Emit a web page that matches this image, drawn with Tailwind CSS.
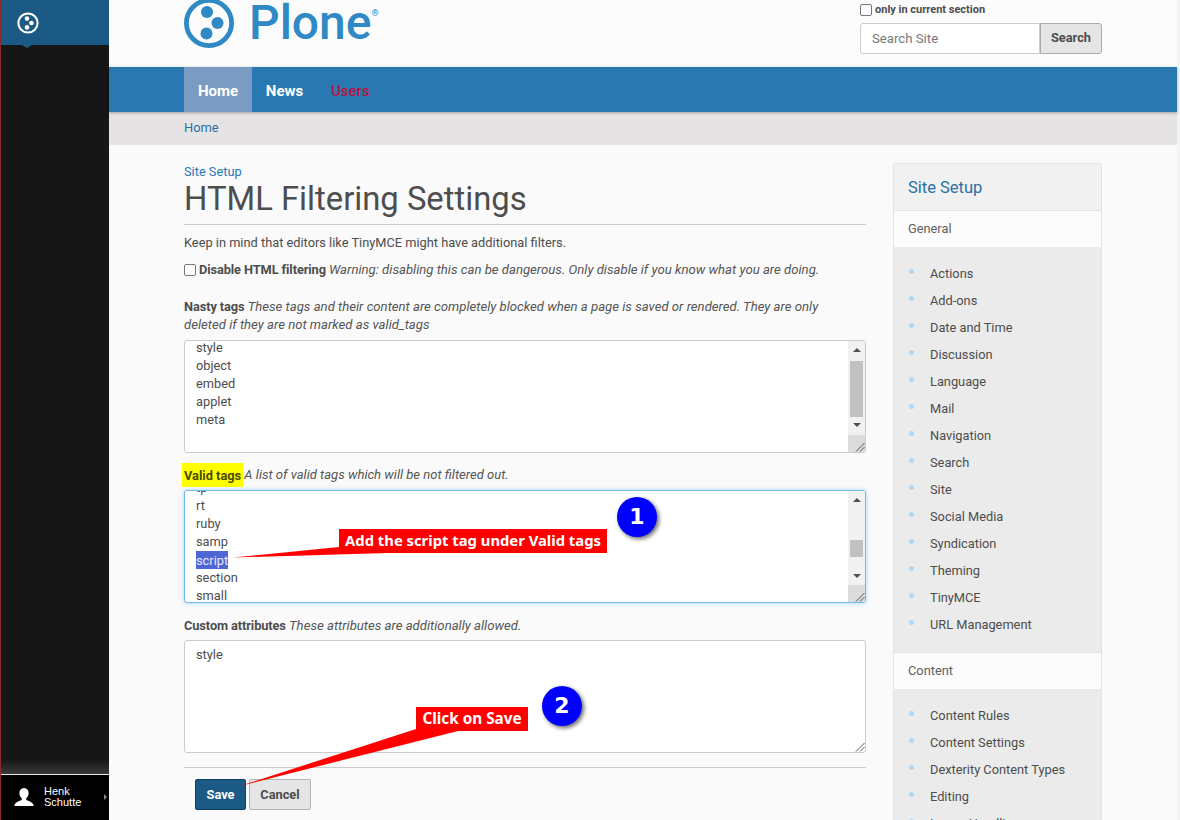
<!DOCTYPE html>
<html lang="en">
<head>
<meta charset="utf-8">
<title>HTML Filtering Settings</title>
<script src="https://cdn.jsdelivr.net/npm/@tailwindcss/browser@4"></script>
</head>
<body class="relative flex h-[820px] w-[1180px] overflow-hidden bg-[#fafafa] font-['Roboto',sans-serif] text-[12.8px] leading-[18px] text-[#4d4d4d]">

<aside class="relative flex w-[109px] shrink-0 flex-col border-l border-l-[#8c2a2a] bg-[#161616]">
  <div class="relative flex h-[45px] shrink-0 items-center bg-[#1a5a85] pl-[16px]">
    <svg width="22" height="22" viewBox="0 0 22 22" fill="none"><circle cx="11" cy="11" r="9.6" stroke="#fff" stroke-width="2"/><circle cx="10" cy="6.6" r="2.3" fill="#fff"/><circle cx="14.5" cy="11" r="2.3" fill="#fff"/><circle cx="10" cy="15.4" r="2.3" fill="#fff"/></svg>
    <div class="absolute left-[21px] top-[45px] h-0 w-0 border-x-[5px] border-t-[3px] border-x-transparent border-t-[#1a5a85]"></div>
  </div>
  <div class="flex-1 bg-gradient-to-b from-[#161616] from-[98%] to-[#3a3a3a]"></div>
  <div class="relative flex h-[46px] shrink-0 items-center border-t border-t-[#e8e8e8] bg-black pl-[13px] text-white">
    <svg width="20" height="19" viewBox="0 0 20 19" fill="#fff"><path d="M10 0c3 0 4.6 2.2 4.6 5 0 2.300-1 4.300-2.300 5.300v1.700c2.500 1 6 2.300 7.200 4.500v1.500H.5v-1.500c1.200-2.200 4.700-3.500 7.200-4.500v-1.700C6.400 9.300 5.400 7.300 5.400 5 5.400 2.200 7 0 10 0z"/></svg>
    <div class="ml-[10px] pb-[2px] font-['Liberation_Sans',sans-serif] text-[11px] font-medium leading-[11px]">Henk<br>Schutte</div>
    <div class="absolute left-[103px] top-[19px] h-0 w-0 border-y-[3px] border-l-[3px] border-y-transparent border-l-[#888]"></div>
  </div>
</aside>

<main class="flex w-[1068px] shrink-0 flex-col">
  <header class="flex h-[67px] shrink-0 items-start justify-between bg-[#fcfcfc] pl-[75px] pr-[75px]">
    <div class="flex items-start text-[#2f89c5]">
      <svg class="-mt-[2px]" width="50" height="50" viewBox="0 0 50 50" fill="none"><circle cx="25" cy="25" r="22.6" stroke="#2f89c5" stroke-width="4.800"/><circle cx="23" cy="14" r="6" fill="#2f89c5"/><circle cx="33.500" cy="25" r="6" fill="#2f89c5"/><circle cx="22.500" cy="35.500" r="6" fill="#2f89c5"/></svg>
      <span class="ml-[15px] -mt-[6px] text-[48px] font-medium leading-[58px]">Plone</span>
      <span class="mt-[9px] text-[9px] leading-[8px]">®</span>
    </div>
    <div class="w-[242px] pt-[2px]">
      <label class="flex h-[16px] items-center gap-[3px] text-[11px] font-bold leading-[16px]">
        <span class="h-[12px] w-[12px] rounded-[2px] border border-[#767676] bg-white"></span>only in current section
      </label>
      <div class="mt-[5px] flex h-[31px]">
        <div class="flex w-[180px] items-center rounded-l-[3px] border border-[#ccc] bg-white pl-[11px] text-[13.2px] text-[#777]">Search Site</div>
        <div class="flex w-[62px] items-center justify-center rounded-r-[3px] border border-[#aaa] bg-[#e5e5e5] pb-[2px] font-bold text-[#4d4d4d]">Search</div>
      </div>
    </div>
  </header>

  <nav class="relative z-10 flex h-[45px] shrink-0 bg-[#2a78b2] pl-[75px] text-[15px] font-bold shadow-[0_1px_3px_rgba(0,0,0,0.3)]">
    <a class="flex w-[68px] items-center justify-center bg-[#7a9cc2] pt-[2px] text-white">Home</a>
    <a class="flex w-[66px] items-center justify-center pr-[1px] pt-[2px] text-white">News</a>
    <a class="flex items-center pl-[13px] pt-[2px] font-medium text-[#b5163f]">Users</a>
  </nav>
  <div class="flex h-[33px] shrink-0 items-center bg-[#e5e3e4] pb-[2px] pl-[75px] text-[#2a6fa5]">Home</div>

  <div class="flex gap-[27px] pl-[75px] pt-[18px]">
    <section class="w-[682px] shrink-0">
      <div class="text-[#2a78b2]">Site Setup</div>
      <h1 class="border-b border-b-[#ccc] pb-[7px] text-[32.8px] font-normal leading-[36px] text-[#4d4d4d]">HTML Filtering Settings</h1>
      <p class="mt-[9px]">Keep in mind that editors like TinyMCE might have additional filters.</p>
      <div class="mt-[9px] flex items-center gap-[3px]">
        <span class="h-[12px] w-[12px] rounded-[2px] border border-[#767676] bg-white"></span>
        <span><b class="tracking-[-0.1px]">Disable HTML filtering</b> <i class="text-[13.15px] text-[#555]">Warning: disabling this can be dangerous. Only disable if you know what you are doing.</i></span>
      </div>
      <p class="mt-[19px]"><b class="tracking-[-0.1px]">Nasty tags</b> <i class="text-[13.15px] text-[#555]">These tags and their content are completely blocked when a page is saved or rendered. They are only<br>deleted if they are not marked as valid_tags</i></p>

      <div class="relative mt-[6px] flex h-[113px] overflow-hidden rounded-[3px] border border-[#ccc] bg-white">
        <div class="flex-1 pl-[11px] -mt-[2px]">style<br>object<br>embed<br>applet<br>meta</div>
        <div class="flex w-[17px] flex-col items-center bg-[#f1f1f1]">
          <svg class="mt-[7px]" width="8" height="4" viewBox="0 0 8 4"><path d="M4 0 8 4H0z" fill="#505050"/></svg>
          <div class="mt-[9px] h-[56px] w-[13px] bg-[#c1c1c1]"></div>
          <svg class="mt-[6px]" width="8" height="4" viewBox="0 0 8 4"><path d="M0 0h8L4 4z" fill="#505050"/></svg>
          <div class="mt-[8px] flex h-[17px] w-[17px] items-end justify-end bg-[#dcdcdc]">
            <svg width="10" height="10" viewBox="0 0 10 10" stroke="#555"><path d="M1 9.500 9.500 1M5 9.500 9.500 5"/></svg>
          </div>
        </div>
      </div>

      <p class="mt-[13px]"><b class="-mx-[2px] bg-[#ffff00] px-[2px] py-[4.5px] text-[#4a4a00]">Valid tags</b> <i class="text-[13.05px] text-[#555]">A list of valid tags which will be not filtered out.</i></p>

      <div class="relative mt-[6px] flex h-[113px] overflow-hidden rounded-[3px] border border-[#6cbcf0] bg-white shadow-[0_0_4px_rgba(108,188,240,0.6)]">
        <div class="flex-1 pl-[11px] -mt-[12px]">tp<br>rt<br>ruby<br>samp<br><span class="bg-[#4f66d6] py-[1.5px] text-[#e8e8ff]">script</span><br>section<br>small</div>
        <div class="flex w-[17px] flex-col items-center bg-[#f1f1f1]">
          <svg class="mt-[7px]" width="8" height="4" viewBox="0 0 8 4"><path d="M4 0 8 4H0z" fill="#505050"/></svg>
          <div class="mt-[38px] h-[17px] w-[13px] bg-[#c1c1c1]"></div>
          <svg class="mt-[17px]" width="8" height="4" viewBox="0 0 8 4"><path d="M0 0h8L4 4z" fill="#505050"/></svg>
          <div class="mt-[7px] flex h-[17px] w-[17px] items-end justify-end bg-[#dcdcdc]">
            <svg width="10" height="10" viewBox="0 0 10 10" stroke="#555"><path d="M1 9.500 9.500 1M5 9.500 9.500 5"/></svg>
          </div>
        </div>
      </div>

      <p class="mt-[14px]"><b class="tracking-[-0.1px]">Custom attributes</b> <i class="text-[13.15px] text-[#555]">These attributes are additionally allowed.</i></p>

      <div class="relative mt-[5px] flex h-[113px] rounded-[3px] border border-[#ccc] bg-white pl-[11px] pt-[5px]">style
        <svg class="absolute bottom-0 right-0" width="10" height="10" viewBox="0 0 10 10" stroke="#555"><path d="M1 9.500 9.500 1M5 9.500 9.500 5"/></svg>
      </div>

      <div class="mt-[14px] border-t border-t-[#ccc] pl-[11px] pt-[11px]">
        <div class="flex gap-[3px] font-bold">
          <button class="h-[31px] w-[51px] rounded-[2px] border border-[#10405f] bg-[#1b5a85] text-white">Save</button>
          <button class="h-[31px] w-[62px] rounded-[2px] border border-[#b5b5b5] bg-[#e5e5e5] text-[#4d4d4d]">Cancel</button>
        </div>
      </div>
    </section>

    <aside class="w-[209px] shrink-0 rounded-t-[3px] border-x border-t border-[#e4e4e4] bg-[#ebebeb]">
      <h2 class="flex h-[47px] items-center border-b border-b-[#e4e4e4] bg-[#f1f1f1] pl-[14px] pt-[2px] text-[16.5px] font-normal text-[#2a6fa5]">Site Setup</h2>
      <div class="flex h-[36px] items-center bg-[#fcfcfc] pl-[14px] text-[#5f5f5f]">General</div>
      <ul class="flex flex-col gap-[9px] pb-[18px] pl-[15px] pt-[18px]">
        <li class="flex items-start gap-[16px]"><span class="mt-[4px] h-[5px] w-[5px] rounded-full bg-[#aed8f5]"></span>Actions</li>
        <li class="flex items-start gap-[16px]"><span class="mt-[4px] h-[5px] w-[5px] rounded-full bg-[#aed8f5]"></span>Add-ons</li>
        <li class="flex items-start gap-[16px]"><span class="mt-[4px] h-[5px] w-[5px] rounded-full bg-[#aed8f5]"></span>Date and Time</li>
        <li class="flex items-start gap-[16px]"><span class="mt-[4px] h-[5px] w-[5px] rounded-full bg-[#aed8f5]"></span>Discussion</li>
        <li class="flex items-start gap-[16px]"><span class="mt-[4px] h-[5px] w-[5px] rounded-full bg-[#aed8f5]"></span>Language</li>
        <li class="flex items-start gap-[16px]"><span class="mt-[4px] h-[5px] w-[5px] rounded-full bg-[#aed8f5]"></span>Mail</li>
        <li class="flex items-start gap-[16px]"><span class="mt-[4px] h-[5px] w-[5px] rounded-full bg-[#aed8f5]"></span>Navigation</li>
        <li class="flex items-start gap-[16px]"><span class="mt-[4px] h-[5px] w-[5px] rounded-full bg-[#aed8f5]"></span>Search</li>
        <li class="flex items-start gap-[16px]"><span class="mt-[4px] h-[5px] w-[5px] rounded-full bg-[#aed8f5]"></span>Site</li>
        <li class="flex items-start gap-[16px]"><span class="mt-[4px] h-[5px] w-[5px] rounded-full bg-[#aed8f5]"></span>Social Media</li>
        <li class="flex items-start gap-[16px]"><span class="mt-[4px] h-[5px] w-[5px] rounded-full bg-[#aed8f5]"></span>Syndication</li>
        <li class="flex items-start gap-[16px]"><span class="mt-[4px] h-[5px] w-[5px] rounded-full bg-[#aed8f5]"></span>Theming</li>
        <li class="flex items-start gap-[16px]"><span class="mt-[4px] h-[5px] w-[5px] rounded-full bg-[#aed8f5]"></span>TinyMCE</li>
        <li class="flex items-start gap-[16px]"><span class="mt-[4px] h-[5px] w-[5px] rounded-full bg-[#aed8f5]"></span>URL Management</li>
      </ul>
      <div class="flex h-[37px] items-center border-t border-t-[#e4e4e4] bg-[#fcfcfc] pl-[14px] text-[#5f5f5f]">Content</div>
      <ul class="flex flex-col gap-[9px] pl-[15px] pt-[18px]">
        <li class="flex items-start gap-[16px]"><span class="mt-[4px] h-[5px] w-[5px] rounded-full bg-[#aed8f5]"></span>Content Rules</li>
        <li class="flex items-start gap-[16px]"><span class="mt-[4px] h-[5px] w-[5px] rounded-full bg-[#aed8f5]"></span>Content Settings</li>
        <li class="flex items-start gap-[16px]"><span class="mt-[4px] h-[5px] w-[5px] rounded-full bg-[#aed8f5]"></span>Dexterity Content Types</li>
        <li class="flex items-start gap-[16px]"><span class="mt-[4px] h-[5px] w-[5px] rounded-full bg-[#aed8f5]"></span>Editing</li>
        <li class="flex items-start gap-[16px]"><span class="mt-[4px] h-[5px] w-[5px] rounded-full bg-[#aed8f5]"></span>Image Handling</li>
      </ul>
    </aside>
  </div>
</main>
<div class="w-[3px] shrink-0 bg-[#f3f3f3]"></div>

<svg class="pointer-events-none absolute left-0 top-0" width="1180" height="820" fill="#ff0000">
  <polygon points="233,557.500 339,547 387,553"/>
  <polygon points="240,786 416,729 458,731"/>
</svg>
<div class="absolute left-[339px] top-[529px] flex h-[24px] w-[268px] items-center justify-center bg-[#ff0000] pb-[2px] font-['Noto_Sans',sans-serif] text-[14.8px] font-bold text-white">Add the script tag under Valid tags</div>
<div class="absolute left-[416px] top-[707px] flex h-[24px] w-[112px] items-center justify-center bg-[#ff0000] pb-[2px] font-['Noto_Sans',sans-serif] text-[15.3px] font-bold text-white">Click on Save</div>
<div class="absolute left-[617px] top-[497px] flex h-[40px] w-[40px] items-center justify-center rounded-full bg-[#0000ff] font-['DejaVu_Sans',sans-serif] text-[22px] font-bold text-white shadow-[2px_2px_4px_rgba(0,0,0,0.6)]">1</div>
<div class="absolute left-[542px] top-[686px] flex h-[40px] w-[40px] items-center justify-center rounded-full bg-[#0000ff] font-['DejaVu_Sans',sans-serif] text-[22px] font-bold text-white shadow-[2px_2px_4px_rgba(0,0,0,0.6)]">2</div>
</body>
</html>
